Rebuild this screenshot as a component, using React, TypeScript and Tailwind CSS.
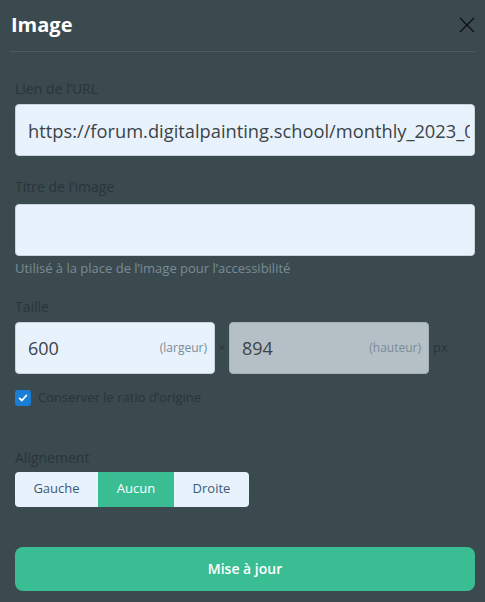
export default function App() {
  return (
    <div
      className="w-[485px] h-[602px] bg-[#3a4a4f] overflow-hidden"
      style={{ fontFamily: '"Open Sans", "Liberation Sans", sans-serif' }}
    >
      {/* Header */}
      <div className="flex items-center justify-between h-[52px] mx-[10px] border-b border-[#4d5c61]">
        <h1 className="text-[20px] font-bold text-white pl-[1px] pb-[2px]">Image</h1>
        <button className="w-[16px] h-[16px] mb-[2px]">
          <svg viewBox="0 0 16 16" className="w-[16px] h-[16px]" fill="none" stroke="#111" strokeWidth={1.4}>
            <path d="M1 1L15 15M15 1L1 15" />
          </svg>
        </button>
      </div>

      <div className="pl-[15px] pr-[10px] pt-[27px]">
        {/* URL */}
        <label className="block text-[14px] leading-[20px] text-[#2b3538] mb-[5px]">Lien de l’URL</label>
        <input
          readOnly
          value="https://forum.digitalpainting.school/monthly_2023_06/image.png"
          className="block w-full h-[52px] rounded-[4px] bg-[#e8f2fc] border border-[#c9d3db] pl-[12px] pr-[4px] text-[18.3px] text-[#3b4448] outline-none"
        />

        {/* Titre */}
        <label className="block text-[14px] leading-[20px] text-[#2b3538] mt-[21px] mb-[7px]">Titre de l’image</label>
        <div className="h-[52px] rounded-[4px] bg-[#e8f2fc] border border-[#c9d3db]" />
        <p className="text-[13px] leading-[18px] text-[#7a8b94] mt-[3px]">
          Utilisé à la place de l’image pour l’accessibilité
        </p>

        {/* Taille */}
        <label className="block text-[14px] leading-[20px] text-[#2b3538] mt-[20px] mb-[5px]">Taille</label>
        <div className="flex items-center">
          <div className="w-[200px] h-[52px] rounded-[4px] bg-[#e8f2fc] border border-[#c9d3db] flex items-center justify-between pl-[12px] pr-[7px]">
            <span className="text-[18px] text-[#3b4448]">600</span>
            <span className="text-[12px] text-[#7a8b94]">(largeur)</span>
          </div>
          <span className="w-[14px] text-center text-[12px] text-[#2b3538]">×</span>
          <div className="w-[200px] h-[52px] rounded-[4px] bg-[#b5c0c6] border border-[#a6b1b7] flex items-center justify-between pl-[12px] pr-[7px]">
            <span className="text-[18px] text-[#3b4448]">894</span>
            <span className="text-[12px] text-[#7a8b94]">(hauteur)</span>
          </div>
          <span className="ml-[4px] text-[13px] text-[#2b3538]">px</span>
        </div>

        <label className="flex items-center mt-[14px] gap-[7px]">
          <span className="w-[16px] h-[16px] rounded-[3px] bg-[#1a7fd4] flex items-center justify-center">
            <svg viewBox="0 0 12 12" className="w-[10px] h-[10px]" fill="none" stroke="white" strokeWidth={2.2} strokeLinecap="round" strokeLinejoin="round">
              <path d="M2 6.5L4.7 9L10 3" />
            </svg>
          </span>
          <span className="text-[13px] text-[#2b3538]">Conserver le ratio d’origine</span>
        </label>

        {/* Alignement */}
        <label className="block text-[14px] leading-[20px] text-[#2b3538] mt-[40px] mb-[4px]">Alignement</label>
        <div className="flex w-[234px] h-[35px] rounded-[4px] overflow-hidden text-[13px]">
          <button className="w-[83px] bg-[#e8f2fc] text-[#3d5a75]">Gauche</button>
          <button className="w-[76px] bg-[#3bbd94] text-white">Aucun</button>
          <button className="w-[75px] bg-[#e8f2fc] text-[#3d5a75]">Droite</button>
        </div>

        <button className="mt-[40px] w-full h-[44px] rounded-[8px] bg-[#3bbd94] text-white text-[14px] font-semibold">
          Mise à jour
        </button>
      </div>
    </div>
  )
}
